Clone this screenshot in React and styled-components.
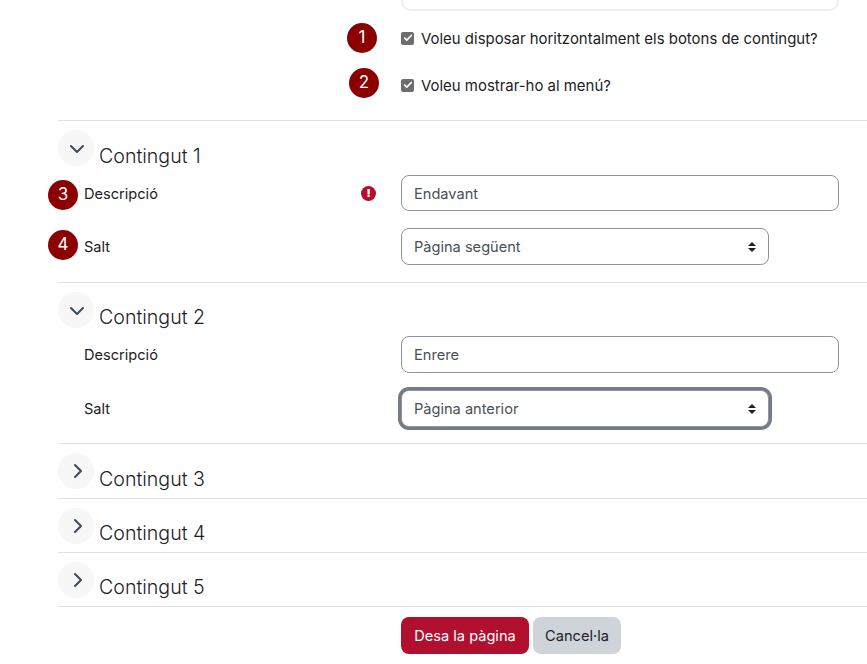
import styled, { createGlobalStyle } from 'styled-components';
import { ChevronDown, ChevronRight, Check } from 'lucide-react';

const GlobalStyle = createGlobalStyle`
  html, body {
    margin: 0;
    padding: 0;
    background: #fff;
    overflow: hidden;
  }
  body {
    font-family: Inter, "Liberation Sans", sans-serif;
    font-size: 14.6px;
    font-weight: 370;
    color: #1d2125;
  }
`;

const collapsed = [
  { title: 'Contingut 3', height: 55, drop: 1 },
  { title: 'Contingut 4', height: 54, drop: 0 },
  { title: 'Contingut 5', height: 54, drop: 0 },
];

const App = () => (
  <Page>
    <GlobalStyle />
    <ClippedField>
      <TopInput>p</TopInput>
    </ClippedField>

    <CheckRow $top={18}>
      <Marker $left={347} $top={-6}>1</Marker>
      <CheckBox><Check size={10} strokeWidth={4} color="#fff" /></CheckBox>
      <CheckLabel>Voleu disposar horitzontalment els botons de contingut?</CheckLabel>
    </CheckRow>
    <CheckRow $top={29}>
      <Marker $left={349} $top={-8}>2</Marker>
      <CheckBox><Check size={10} strokeWidth={4} color="#fff" /></CheckBox>
      <CheckLabel>Voleu mostrar-ho al menú?</CheckLabel>
    </CheckRow>

    <Sections>
      <Section $height={162}>
        <SectionHead $after={9}>
          <Toggle $open><ChevronDown size={24} strokeWidth={2} /></Toggle>
          <SectionTitle $drop={1}>Contingut 1</SectionTitle>
        </SectionHead>
        <FieldRow $height={36} $nudge>
          <Marker $left={48} $top={5}>3</Marker>
          <FieldLabel>Descripció</FieldLabel>
          <ErrorIcon>!</ErrorIcon>
          <TextField>Endavant</TextField>
        </FieldRow>
        <FieldRow $height={37} $gap={17}>
          <Marker $left={48} $top={2}>4</Marker>
          <FieldLabel>Salt</FieldLabel>
          <SelectField>Pàgina següent<Arrows /></SelectField>
        </FieldRow>
      </Section>

      <Section $height={161}>
        <SectionHead $after={8}>
          <Toggle $open><ChevronDown size={24} strokeWidth={2} /></Toggle>
          <SectionTitle $drop={0}>Contingut 2</SectionTitle>
        </SectionHead>
        <FieldRow $height={37}>
          <FieldLabel>Descripció</FieldLabel>
          <TextField>Enrere</TextField>
        </FieldRow>
        <FieldRow $height={37} $gap={17}>
          <FieldLabel>Salt</FieldLabel>
          <SelectField $focused>Pàgina anterior<Arrows /></SelectField>
        </FieldRow>
      </Section>

      {collapsed.map((item) => (
        <Section key={item.title} $height={item.height}>
          <SectionHead>
            <Toggle><ChevronRight size={24} strokeWidth={2} /></Toggle>
            <SectionTitle $drop={item.drop}>{item.title}</SectionTitle>
          </SectionHead>
        </Section>
      ))}
      <Rule />
    </Sections>

    <Actions>
      <PrimaryButton>Desa la pàgina</PrimaryButton>
      <SecondaryButton>Cancel·la</SecondaryButton>
    </Actions>
  </Page>
);

const Arrows = () => (
  <svg width="8" height="10" viewBox="0 0 8 10" fill="#1d2125">
    <path d="M4 0 L8 4 H0 Z M0 6 H8 L4 10 Z" />
  </svg>
);

const Page = styled.div`
  width: 867px;
  height: 664px;
  overflow: hidden;
`;

const ClippedField = styled.div`
  height: 11px;
  padding-left: 401px;
  overflow: hidden;
  display: flex;
  align-items: flex-end;
`;

const TopInput = styled.div`
  flex: none;
  box-sizing: border-box;
  width: 438px;
  height: 30px;
  padding-left: 9px;
  border: 2px solid #eeeef1;
  border-radius: 10px;
  color: #6a5d8c;
  line-height: 17px;
`;

const CheckRow = styled.div`
  position: relative;
  display: flex;
  align-items: center;
  gap: 7px;
  height: 18px;
  margin-top: ${(p) => p.$top}px;
  padding-left: 401px;
`;

const CheckBox = styled.span`
  width: 13px;
  height: 13px;
  border-radius: 2px;
  background: #6d6d6d;
  display: flex;
  align-items: center;
  justify-content: center;
`;

const CheckLabel = styled.span`
  margin-top: 2px;
  font-size: 14.95px;
  line-height: 18px;
`;

const Marker = styled.span`
  position: absolute;
  left: ${(p) => p.$left}px;
  top: ${(p) => p.$top}px;
  width: 30px;
  height: 30px;
  border-radius: 50%;
  background: #8b0000;
  color: #fff;
  font-size: 17px;
  line-height: 28px;
  text-align: center;
`;

const Sections = styled.div`
  margin-top: 26px;
  margin-left: 58px;
`;

const Section = styled.section`
  box-sizing: border-box;
  height: ${(p) => p.$height}px;
  border-top: 1px solid #dee2e6;
`;

const Rule = styled.div`
  border-top: 1px solid #dee2e6;
`;

const SectionHead = styled.div`
  display: flex;
  align-items: flex-end;
  gap: 5px;
  padding-top: 9px;
  margin-bottom: ${(p) => p.$after || 0}px;
`;

const Toggle = styled.span`
  width: 36px;
  height: 36px;
  border-radius: 50%;
  background: #f7f7f7;
  color: #3f4a5a;
  display: flex;
  align-items: center;
  justify-content: center;
  & > svg {
    transform: ${(p) => (p.$open ? 'translate(1px, 1px)' : 'translate(2px, 0)')};
  }
`;

const SectionTitle = styled.h3`
  margin: 0 0 ${(p) => -p.$drop}px;
  font-size: 19.6px;
  font-weight: 300;
  line-height: 22px;
`;

const FieldRow = styled.div`
  position: relative;
  box-sizing: border-box;
  display: flex;
  align-items: center;
  height: ${(p) => p.$height}px;
  margin-top: ${(p) => p.$gap || 0}px;
  margin-left: -58px;
  padding-left: 84px;
  padding-top: ${(p) => (p.$nudge ? 1 : 0)}px;
  & > div {
    padding-top: ${(p) => (p.$nudge ? 1 : 0)}px;
  }
`;

const FieldLabel = styled.span``;

const ErrorIcon = styled.span`
  position: absolute;
  left: 361px;
  top: 11px;
  width: 15px;
  height: 15px;
  border-radius: 50%;
  background: #b30e2d;
  color: #fff;
  font-size: 11px;
  font-weight: 900;
  line-height: 15px;
  text-align: center;
`;

const TextField = styled.div`
  position: absolute;
  left: 401px;
  top: 0;
  box-sizing: border-box;
  width: 438px;
  height: 100%;
  padding: 0 12px;
  display: flex;
  align-items: center;
  border: 1px solid #8f959e;
  border-radius: 8px;
  color: #495057;
  background: #fff;
`;

const SelectField = styled.div`
  position: absolute;
  left: 401px;
  top: 0;
  box-sizing: border-box;
  width: 368px;
  height: 100%;
  padding: 0 12px;
  display: flex;
  align-items: center;
  justify-content: space-between;
  border: 1px solid #8f959e;
  border-radius: 8px;
  color: #495057;
  background: #fff;
  ${(p) => p.$focused && 'box-shadow: 0 0 0 3px #747b84;'}
`;

const Actions = styled.div`
  display: flex;
  gap: 4px;
  margin-top: 10px;
  padding-left: 401px;
`;

const PrimaryButton = styled.button`
  width: 128px;
  height: 37px;
  padding: 0;
  border: 0;
  border-radius: 8px;
  background: #b0102d;
  color: #fff;
  font: inherit;
`;

const SecondaryButton = styled(PrimaryButton)`
  width: 88px;
  background: #ced4da;
  color: #1d2125;
`;

export default App;
